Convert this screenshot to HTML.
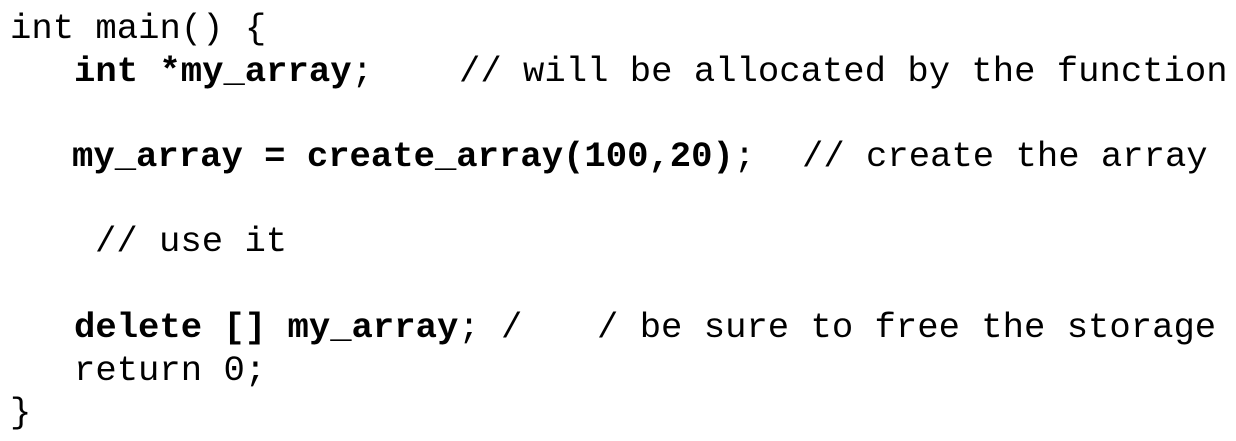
<!DOCTYPE html>
<html><head><style>
html,body{margin:0;padding:0;background:#fff;width:1236px;height:441px;overflow:hidden}
.l{position:absolute;font-family:"Liberation Mono",monospace;font-size:35.6px;line-height:42px;color:#000;white-space:pre}
b{font-weight:bold}
</style></head><body>
<div class="l" style="left:10px;top:8px">int main() {</div>
<div class="l" style="left:74px;top:51px"><b>int *my_array</b>;</div>
<div class="l" style="left:459px;top:51px">// will be allocated by the function</div>
<div class="l" style="left:72px;top:136px"><b>my_array = create_array(100,20)</b>;</div>
<div class="l" style="left:802px;top:136px">// create the array</div>
<div class="l" style="left:95px;top:221px">// use it</div>
<div class="l" style="left:74px;top:307px"><b>delete [] my_array</b>; /</div>
<div class="l" style="left:597px;top:307px">/ be sure to free the storage</div>
<div class="l" style="left:74px;top:350px">return 0;</div>
<div class="l" style="left:10px;top:392px">}</div>
</body></html>
